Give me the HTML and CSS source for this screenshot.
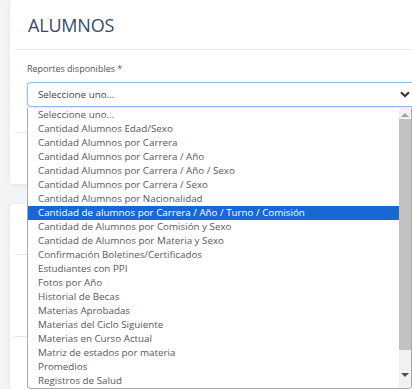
FILE: index.html
```html
<!DOCTYPE html>
<html lang="es">
<head>
	<meta charset="UTF-8" />
	<title>Alumnos - Reportes</title>
	<link rel="stylesheet" href="styles.css">
</head>
<body>
	<div class="page">
		<!-- tarjeta de reportes -->
		<div class="card">
			<div class="card-head">
				<h1>ALUMNOS</h1>
			</div>
			<div class="card-body">
				<div class="field">
					<label>Reportes disponibles *</label>
					<div class="select">
						<span>Seleccione uno...</span>
						<svg class="chevron" width="10" height="7" viewBox="0 0 10 7"><path d="M1 1.2 L5 5.2 L9 1.2" fill="none" stroke="#333" stroke-width="2"/></svg>
					</div>
					<!-- lista desplegada -->
					<div class="options">
						<ul>
							<li>Seleccione uno...</li>
							<li>Cantidad Alumnos Edad/Sexo</li>
							<li>Cantidad Alumnos por Carrera</li>
							<li>Cantidad Alumnos por Carrera / Año</li>
							<li>Cantidad Alumnos por Carrera / Año / Sexo</li>
							<li>Cantidad Alumnos por Carrera / Sexo</li>
							<li>Cantidad Alumnos por Nacionalidad</li>
							<li class="active">Cantidad de alumnos por Carrera / Año / Turno / Comisión</li>
							<li>Cantidad de Alumnos por Comisión y Sexo</li>
							<li>Cantidad de Alumnos por Materia y Sexo</li>
							<li>Confirmación Boletines/Certificados</li>
							<li>Estudiantes con PPI</li>
							<li>Fotos por Año</li>
							<li>Historial de Becas</li>
							<li>Materias Aprobadas</li>
							<li>Materias del Ciclo Siguiente</li>
							<li>Materias en Curso Actual</li>
							<li>Matriz de estados por materia</li>
							<li>Promedios</li>
							<li>Registros de Salud</li>
						</ul>
						<div class="scrollbar">
							<span class="arrow up"></span>
							<span class="thumb"></span>
							<span class="arrow down"></span>
						</div>
					</div>
				</div>
			</div>
			<div class="card-foot"></div>
		</div>
		<!-- tarjeta inferior -->
		<div class="card card2">
			<div class="row"></div>
			<div class="row"></div>
		</div>
	</div>
</body>
</html>
```
FILE: styles.css
```css
*{
	margin:0;
	padding:0;
	box-sizing:border-box;
}
html,body{
	height:100%;
	overflow:hidden;
}
body{
	background:#f3f4f6;
	font-family:"Open Sans","Noto Sans",sans-serif;
}
.page{
	height:100%;
	padding-left:10px;
	overflow:hidden;
}
.card{
	background:#fff;
	border-radius:4px 0 0 4px;
	box-shadow:0 1px 4px rgba(0,0,0,0.08);
}
.card-head{
	margin-left:4px;
	padding:13px 14px 12px;
	border-bottom:1px solid #e6e7ea;
}
.card-head h1{
	font-size:18px;
	line-height:24px;
	font-weight:400;
	color:#3b4866;
	letter-spacing:-0.2px;
}
.card-body{
	padding:13px 0 0 17px;
	height:82px;
}
.field{
	position:relative;
}
.field label{
	display:block;
	font-size:9px;
	line-height:12px;
	color:#555;
	margin-bottom:7px;
}
.select{
	display:flex;
	align-items:center;
	justify-content:space-between;
	height:25px;
	margin-right:-6px;
	padding:0 8px 0 10px;
	border:1px solid #9db8e6;
	border-right:0;
	border-radius:4px 0 0 4px;
	box-shadow:0 1px 3px rgba(80,120,200,0.25);
	font-size:9.8px;
	color:#444;
}
.options{
	position:absolute;
	top:45px;
	left:0;
	width:385px;
	height:281px;
	background:#fff;
	border:1px solid #a9a9a9;
	border-top:0;
	border-radius:0 0 4px 4px;
	display:flex;
	overflow:hidden;
	z-index:2;
}
.options ul{
	flex:1;
	list-style:none;
}
.options li{
	height:14px;
	line-height:14px;
	padding-left:10px;
	font-size:9.8px;
	color:#575763;
	white-space:nowrap;
}
.options li.active{
	background:#1967d2;
	color:#fff;
}
.scrollbar{
	width:12px;
	background:#f1f1f1;
	display:flex;
	flex-direction:column;
	align-items:center;
}
.scrollbar .thumb{
	width:100%;
	height:231px;
	background:#c1c1c1;
	margin:2px 0 0;
}
.scrollbar .arrow{
	width:0;
	height:0;
	border-left:4px solid transparent;
	border-right:4px solid transparent;
}
.scrollbar .up{
	margin-top:5px;
	border-bottom:4px solid #a3a3a3;
}
.scrollbar .down{
	margin-top:23px;
	border-top:4px solid #505050;
}
.card-foot{
	margin-left:4px;
	border-top:1px solid #e6e7ea;
	height:52px;
}
.card2{
	margin-top:20px;
	padding-top:50px;
	height:186px;
}
.row{
	margin-left:4px;
	border-top:1px solid #e6e7ea;
	height:82px;
}
```
